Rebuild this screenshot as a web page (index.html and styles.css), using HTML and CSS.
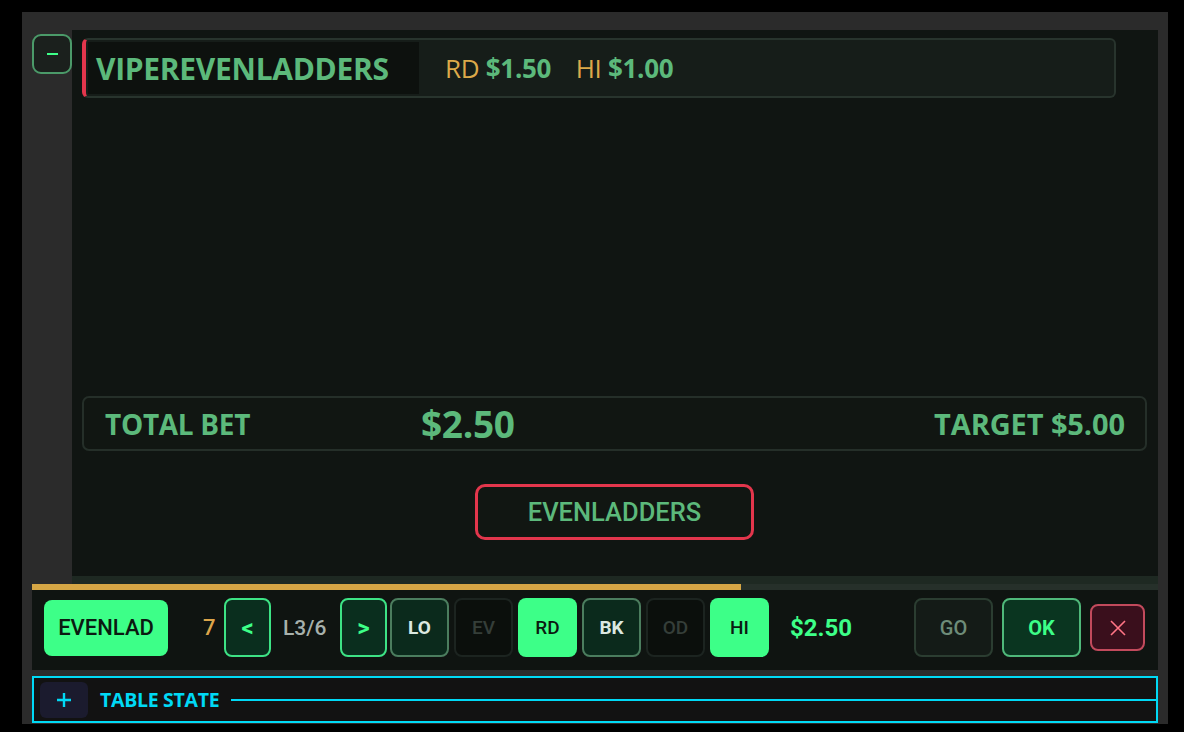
FILE: index.html
```html
<!DOCTYPE html>
<html lang="en">
<head>
<meta charset="utf-8">
<title>Strategy Panel</title>
<link rel="stylesheet" href="styles.css">
</head>
<body>
<div class="panel">
  <div class="top-row">
    <div class="side">
      <button class="collapse-btn" aria-label="collapse"><span class="minus"></span></button>
    </div>
    <div class="content">
      <div class="strategy-card">
        <div class="strategy-name">VIPEREVENLADDERS</div>
        <div class="strategy-bets">
          <span class="bet-key">RD</span> <span class="bet-val">$1.50</span>
          <span class="bet-key gap">HI</span> <span class="bet-val">$1.00</span>
        </div>
      </div>
      <div class="spacer"></div>
      <div class="total-card">
        <div class="total-label">TOTAL BET</div>
        <div class="total-value">$2.50</div>
        <div class="target">TARGET $5.00</div>
      </div>
      <div class="strategy-btn-row">
        <button class="strategy-btn">EVENLADDERS</button>
      </div>
      <div class="content-band"></div>
    </div>
  </div>
  <div class="progress"><div class="progress-fill" style="width: 709px"></div></div>
  <div class="controls">
    <button class="ctl-name">EVENLAD</button>
    <span class="count">7</span>
    <button class="nav-btn">&lt;</button>
    <span class="level">L3/6</span>
    <button class="nav-btn">&gt;</button>
    <div class="bets">
      <button class="bet on-dark">LO</button>
      <button class="bet off">EV</button>
      <button class="bet on">RD</button>
      <button class="bet on-dark">BK</button>
      <button class="bet off">OD</button>
      <button class="bet on">HI</button>
    </div>
    <span class="amount">$2.50</span>
    <div class="actions">
      <button class="go-btn">GO</button>
      <button class="ok-btn">OK</button>
      <button class="close-btn" aria-label="close">
        <svg width="18" height="18" viewBox="0 0 18 18"><path d="M2 2 L16 16 M16 2 L2 16" stroke="#ff7585" stroke-width="1.6" fill="none"/></svg>
      </button>
    </div>
  </div>
  <div class="table-state">
    <button class="expand-btn" aria-label="expand">
      <svg width="14" height="14" viewBox="0 0 14 14"><path d="M7 0 V14 M0 7 H14" stroke="#00d9f5" stroke-width="2.4" fill="none"/></svg>
    </button>
    <span class="ts-label">TABLE STATE</span>
    <div class="ts-line"></div>
  </div>
</div>
</body>
</html>
```
FILE: styles.css
```css
* { box-sizing: border-box; }
html, body { margin: 0; padding: 0; background: #000; }
body {
  width: 1184px;
  height: 732px;
  padding: 12px 16px 8px 22px;
  font-family: "Open Sans", "Noto Sans", sans-serif;
}
button { font: inherit; cursor: pointer; padding: 0; }

.panel {
  width: 1146px;
  height: 712px;
  background: #2b2b2b;
  padding: 18px 10px 1px 10px;
  display: flex;
  flex-direction: column;
}

.top-row { display: flex; height: 554px; }
.side { width: 40px; flex: none; }
.collapse-btn {
  margin-top: 4px;
  width: 40px;
  height: 40px;
  border: 2px solid #4b9a69;
  border-radius: 9px;
  background: #1b201d;
  display: flex;
  align-items: center;
  justify-content: center;
}
.minus { display: block; width: 11px; height: 2px; background: #3dff88; }

.content {
  flex: 1;
  background: #101512;
  display: flex;
  flex-direction: column;
  padding: 8px 11px 0 10px;
}
.strategy-card {
  width: 1034px;
  height: 60px;
  border: 2px solid #28342d;
  border-left: 4px solid #e3364c;
  border-radius: 6px;
  background: #161d19;
  padding: 2px;
  display: flex;
  align-items: center;
}
.strategy-name {
  width: 331px;
  height: 52px;
  background: #0d110e;
  color: #5cb97b;
  font-weight: 700;
  font-size: 30px;
  letter-spacing: -0.3px;
  display: flex;
  align-items: center;
  padding-left: 8px;
  white-space: nowrap;
}
.strategy-bets {
  margin-left: 26px;
  font-size: 26px;
  letter-spacing: -0.3px;
  white-space: nowrap;
}
.bet-key { color: #dca94a; font-weight: 400; }
.bet-key.gap { margin-left: 18px; }
.bet-val { color: #5cb97b; font-weight: 700; }

.spacer { flex: 1; }

.total-card {
  height: 55px;
  border: 2px solid #252f29;
  border-radius: 7px;
  background: #111612;
  display: flex;
  align-items: center;
  padding: 0 20px 0 21px;
  color: #5cb97b;
  font-weight: 700;
  white-space: nowrap;
}
.total-label { width: 316px; font-size: 28px; letter-spacing: -0.3px; }
.total-value { font-size: 37px; letter-spacing: -0.3px; }
.target { margin-left: auto; font-size: 29px; letter-spacing: -0.1px; }

.strategy-btn-row {
  display: flex;
  justify-content: center;
  margin: 33px 0 36px;
}
.strategy-btn {
  width: 279px;
  height: 56px;
  border: 3px solid #e3364c;
  border-radius: 10px;
  background: #111612;
  color: #5cb97b;
  font-family: Roboto, "Noto Sans", sans-serif;
  font-size: 25.5px;
  font-weight: 500;
}
.content-band { height: 8px; background: #1e2922; margin: 0 -11px 0 -10px; }

.progress { height: 6px; background: #26302a; flex: none; }
.progress-fill { height: 100%; background: #d6a645; }

.controls {
  height: 80px;
  flex: none;
  background: #0f1411;
  display: flex;
  align-items: center;
  padding: 0 13px 5px 12px;
  font-family: Roboto, "Noto Sans", sans-serif;
  font-size: 21px;
  font-weight: 500;
}
.ctl-name {
  width: 124px;
  height: 56px;
  border: none;
  border-radius: 8px;
  background: #3dff88;
  color: #0b1a11;
  font-size: 22px;
  font-weight: 500;
}
.count { color: #dca54a; margin-left: 35px; width: 12px; font-size: 22px; }
.nav-btn {
  width: 47px;
  height: 59px;
  margin-left: 9px;
  border: 2px solid #3de385;
  border-radius: 8px;
  background: #0a2e1e;
  color: #3dff88;
  font-size: 24px;
  font-weight: 700;
}
.level { color: #a7b1ac; margin-left: 12px; width: 45px; font-size: 21px; font-weight: 500; }
.level + .nav-btn { margin-left: 12px; }
.bets { display: flex; gap: 5px; margin-left: 3px; }
.bet {
  width: 59px;
  height: 59px;
  border-radius: 8px;
  font-size: 19px;
  font-weight: 500;
}
.bet.on { background: #3dff88; border: none; color: #0b1a11; }
.bet.on-dark { background: #0b2a1c; border: 2px solid #4b7d5e; color: #dbe9e1; font-weight: 700; }
.bet.off { background: #0b0f0c; border: 2px solid #1c2420; color: #353e39; }
.amount { color: #3dff88; font-weight: 700; font-size: 24px; margin-left: 21px; }
.actions { margin-left: auto; display: flex; align-items: center; gap: 9px; }
.go-btn, .ok-btn {
  width: 79px;
  height: 59px;
  border-radius: 8px;
  font-size: 20px;
}
.go-btn { background: #141b17; border: 2px solid #2b3d31; color: #6e8c79; font-weight: 500; }
.ok-btn { background: #0a3520; border: 2px solid #4fb87a; color: #3dff88; font-weight: 700; }
.close-btn {
  width: 55px;
  height: 47px;
  border-radius: 8px;
  background: #3a0f1c;
  border: 2px solid #c24a5c;
  display: flex;
  align-items: center;
  justify-content: center;
}

.table-state {
  margin-top: 6px;
  height: 47px;
  flex: none;
  border: 2px solid #00d9f5;
  background: #121212;
  display: flex;
  align-items: center;
  padding-left: 6px;
}
.expand-btn {
  width: 48px;
  height: 36px;
  border: none;
  border-radius: 6px;
  background: #1b1b2e;
  display: flex;
  align-items: center;
  justify-content: center;
}
.ts-label {
  margin-left: 12px;
  color: #00d9f5;
  font-weight: 700;
  font-size: 19.5px;
  letter-spacing: -0.3px;
}
.ts-line { flex: 1; height: 2px; background: #00d9f5; margin-left: 12px; }
```
